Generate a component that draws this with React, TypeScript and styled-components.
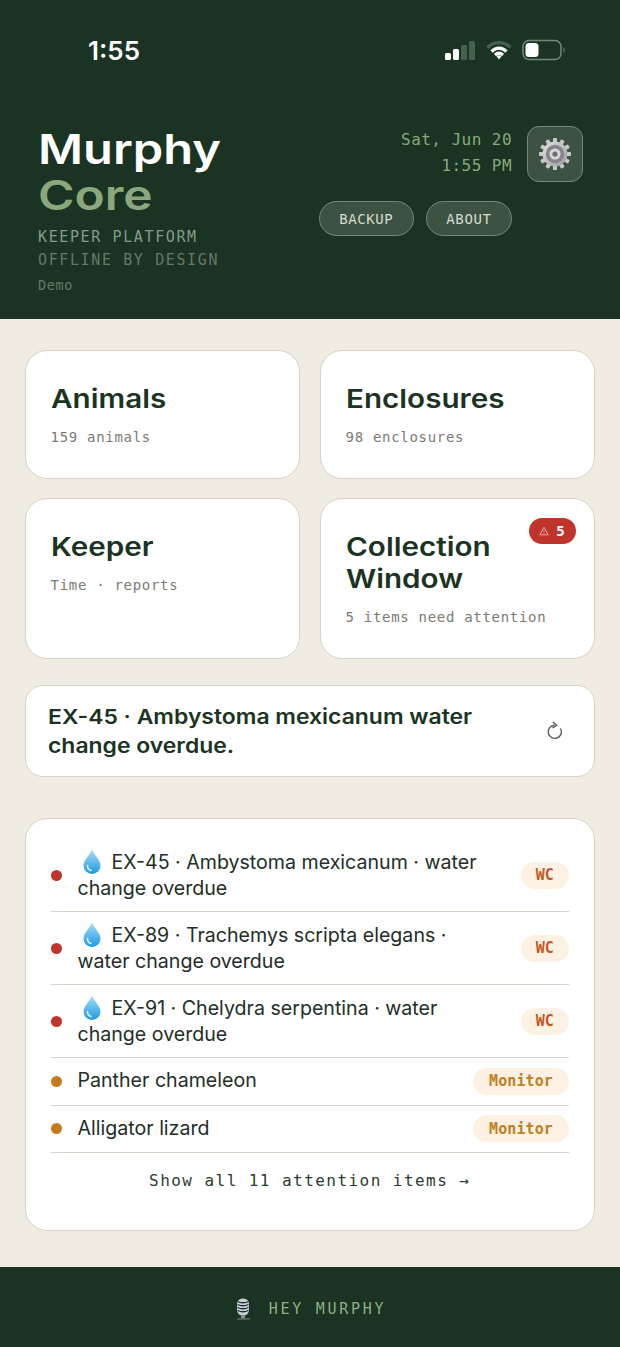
import styled, { createGlobalStyle } from 'styled-components';

const GlobalStyle = createGlobalStyle`
  html, body {
    margin: 0;
    padding: 0;
    background: #f0ebe3;
    font-family: 'Inter', 'Liberation Sans', sans-serif;
  }
`;

const MONO = `'DejaVu Sans Mono', 'Liberation Mono', monospace`;
const FOREST = '#1b3323';

const Page = styled.div`
  width: 620px;
  height: 1347px;
  display: flex;
  flex-direction: column;
  background: #f0ebe3;
  overflow: hidden;
`;

const Header = styled.header`
  height: 319px;
  flex: none;
  box-sizing: border-box;
  background: ${FOREST};
  padding-top: 35px;
`;

const StatusBar = styled.div`
  height: 30px;
  display: flex;
  align-items: center;
  justify-content: space-between;
  padding: 0 54px 0 88px;
`;

const Clock = styled.span`
  font-size: 26px;
  font-weight: 600;
  color: #fff;
`;

const StatusIcons = styled.div`
  display: flex;
  align-items: center;
  gap: 10px;
`;

const HeaderBody = styled.div`
  display: flex;
  justify-content: space-between;
  align-items: flex-start;
  padding: 61px 37px 0 38px;
`;

const Brand = styled.div`
  display: flex;
  flex-direction: column;
`;

/* the display face is wide, so the sans gets stretched horizontally */
const Wide = styled.span<{ $stretch: number }>`
  display: block;
  white-space: nowrap;
  transform: scaleX(${(p) => p.$stretch});
  transform-origin: left center;
`;

const BrandLine = styled.div<{ $color: string }>`
  font-size: 41px;
  line-height: 46px;
  font-weight: 600;
  color: ${(p) => p.$color};
`;

const Tagline = styled.div<{ $color: string; $first?: boolean }>`
  font-family: ${MONO};
  font-size: 15px;
  line-height: 23px;
  letter-spacing: 1.62px;
  margin-top: ${(p) => (p.$first ? '8px' : '0')};
  color: ${(p) => p.$color};
`;

const DemoTag = styled.div`
  font-family: ${MONO};
  font-size: 13.5px;
  line-height: 20px;
  letter-spacing: 0.6px;
  margin-top: 3px;
  color: #64796a;
`;

const HeaderActions = styled.div`
  display: grid;
  grid-template-columns: auto 56px;
  column-gap: 15px;
  row-gap: 19px;
`;

const DateBlock = styled.div`
  padding-top: 1px;
  font-family: ${MONO};
  font-size: 16px;
  line-height: 26px;
  letter-spacing: 0.45px;
  text-align: right;
  color: #8aa87c;
`;

const GearButton = styled.button`
  width: 56px;
  height: 56px;
  box-sizing: border-box;
  padding: 0;
  display: flex;
  align-items: center;
  justify-content: center;
  border-radius: 12px;
  border: 1.5px solid #728a78;
  background: #3d5243;
`;

const PillRow = styled.div`
  display: flex;
  gap: 12px;
`;

const Pill = styled.button`
  height: 35px;
  box-sizing: border-box;
  padding: 0 19.5px;
  border-radius: 18px;
  border: 1.5px solid #728a78;
  background: #3d5243;
  color: #d4dccf;
  font-family: ${MONO};
  font-size: 14px;
  letter-spacing: 0.6px;
`;

const Main = styled.main`
  flex: 1;
  display: flex;
  flex-direction: column;
  padding: 31px 25px 0;
`;

const CardGrid = styled.div`
  display: grid;
  grid-template-columns: 275px 275px;
  grid-template-rows: 129px 161px;
  column-gap: 20px;
  row-gap: 19px;
`;

const Card = styled.div`
  position: relative;
  box-sizing: border-box;
  padding: 32px 24.5px 0;
  background: #fff;
  border: 1.5px solid #d8d3c6;
  border-radius: 22px;
`;

const CardTitle = styled.div`
  font-size: 26px;
  line-height: 32px;
  font-weight: 600;
  color: ${FOREST};
`;

const CardNote = styled.div`
  margin-top: 12px;
  font-family: ${MONO};
  font-size: 14px;
  line-height: 20px;
  letter-spacing: 0.7px;
  color: #7b7b72;
`;

const AlertBadge = styled.div`
  position: absolute;
  top: 18.5px;
  right: 18.5px;
  height: 26px;
  width: 47px;
  display: flex;
  align-items: center;
  justify-content: center;
  gap: 7px;
  border-radius: 13px;
  background: #c0352b;
  color: #fff;
  font-family: ${MONO};
  font-size: 14px;
  font-weight: 700;
`;

const Banner = styled.div`
  height: 92px;
  margin-top: 25.5px;
  box-sizing: border-box;
  display: flex;
  align-items: center;
  justify-content: space-between;
  padding: 0 29.5px 0 21.5px;
  background: #fff;
  border: 1.5px solid #d8d3c6;
  border-radius: 18px;
`;

const BannerText = styled.div`
  font-size: 20.5px;
  line-height: 29px;
  font-weight: 600;
  color: ${FOREST};
`;

const AttentionCard = styled.section`
  height: 413px;
  margin-top: 41px;
  box-sizing: border-box;
  padding: 20.5px 25px 0 24.5px;
  background: #fff;
  border: 1.5px solid #d8d3c6;
  border-radius: 22px;
`;

const AttentionRow = styled.div`
  display: flex;
  align-items: center;
  padding: 9.75px 0;
  border-bottom: 1.5px solid #d9d5ca;
`;

const Dot = styled.span<{ $color: string }>`
  flex: none;
  width: 11px;
  height: 11px;
  border-radius: 50%;
  background: ${(p) => p.$color};
  margin-right: 16px;
`;

const RowText = styled.div`
  flex: 1;
  padding-right: 24px;
  font-size: 19.6px;
  line-height: 25.75px;
  color: #222e28;
`;

const Drop = styled.svg`
  width: 20px;
  height: 25px;
  margin: 0 10px 0 4px;
  vertical-align: -5px;
`;

const Tag = styled.span<{ $color: string; $inset: number }>`
  flex: none;
  height: 27px;
  box-sizing: border-box;
  padding: 0 ${(p) => p.$inset}px;
  display: flex;
  align-items: center;
  border-radius: 14px;
  background: #fdf1e3;
  color: ${(p) => p.$color};
  font-family: ${MONO};
  font-size: 15px;
  font-weight: 700;
  letter-spacing: 0.1px;
`;

const ShowAll = styled.div`
  margin-top: 16px;
  text-align: center;
  font-family: ${MONO};
  font-size: 16px;
  line-height: 24px;
  letter-spacing: 1.45px;
  color: #2b3c30;
`;

const Footer = styled.footer`
  height: 80px;
  flex: none;
  box-sizing: border-box;
  padding-top: 3px;
  display: flex;
  align-items: center;
  justify-content: center;
  gap: 17px;
  background: ${FOREST};
  color: #8fae84;
  font-family: ${MONO};
  font-size: 15px;
  letter-spacing: 2.7px;
`;

function SignalIcon() {
  return (
    <svg width="32" height="20" viewBox="0 0 32 20">
      <rect x="1" y="13" width="6" height="7" rx="1.5" fill="#fff" />
      <rect x="9" y="9" width="6" height="11" rx="1.5" fill="#fff" />
      <rect x="17" y="5" width="6" height="15" rx="1.5" fill="#46604e" />
      <rect x="25" y="1" width="6" height="19" rx="1.5" fill="#46604e" />
    </svg>
  );
}

function WifiIcon() {
  return (
    <svg width="26" height="20" viewBox="0 0 26 20" fill="none" strokeWidth="3.2">
      <path d="M1.5 7.5C8 1 18 1 24.5 7.5" stroke="#46604e" />
      <path d="M5.5 11.5C10 7 16 7 20.5 11.5" stroke="#fff" />
      <path d="M9 15C11.5 12.8 14.5 12.8 17 15" stroke="#fff" />
      <path d="M10.5 16.2L13 19.5L15.5 16.2C14 15 12 15 10.5 16.2Z" fill="#fff" />
    </svg>
  );
}

function BatteryIcon() {
  return (
    <svg width="44" height="22" viewBox="0 0 44 22" fill="none">
      <rect x="1" y="1.5" width="38" height="19" rx="6" stroke="#728a78" strokeWidth="1.5" />
      <rect x="3.5" y="4" width="13" height="14" rx="3.5" fill="#fff" />
      <path d="M41.5 8.5C43 9 43 13 41.5 13.5Z" fill="#728a78" />
    </svg>
  );
}

function GearIcon() {
  const teeth = Array.from({ length: 12 }, (_, i) => i * 30);
  return (
    <svg width="34" height="34" viewBox="0 0 34 34">
      <defs>
        <linearGradient id="gearMetal" x1="0" y1="0" x2="1" y2="1">
          <stop offset="0" stopColor="#e2e2e2" />
          <stop offset="1" stopColor="#9a9a9e" />
        </linearGradient>
      </defs>
      {teeth.map((deg) => (
        <rect key={deg} x="15" y="1" width="4" height="7" rx="0.8" fill="#c9c9c9" transform={`rotate(${deg} 17 17)`} />
      ))}
      <circle cx="17" cy="17" r="12.5" fill="url(#gearMetal)" />
      <circle cx="17" cy="17" r="9.2" fill="#85858e" />
      <circle cx="17" cy="17" r="5.6" fill="#d6d6da" />
      <circle cx="17" cy="17" r="2.6" fill="#6c6c74" />
    </svg>
  );
}

function RefreshIcon() {
  return (
    <svg width="20" height="20" viewBox="0 0 20 20" fill="none" stroke="#5c5c58" strokeWidth="1.4" strokeLinecap="round" strokeLinejoin="round">
      <path d="M9 4.2A6.6 6.6 0 1 0 15.8 8" />
      <path d="M8.2 1.2L11.6 4.3L8 6.6" />
    </svg>
  );
}

function WarningIcon() {
  return (
    <svg width="10" height="10" viewBox="0 0 10 10" fill="none" stroke="#f2a79c" strokeWidth="1">
      <path d="M5 1.2L9.2 8.8H.8Z" strokeLinejoin="round" />
      <path d="M5 4v2.4M5 7.2v.5" strokeWidth="0.8" />
    </svg>
  );
}

function WaterDrop() {
  return (
    <Drop viewBox="0 0 20 25">
      <defs>
        <linearGradient id="dropFill" x1="0" y1="0" x2="0" y2="1">
          <stop offset="0" stopColor="#a9defa" />
          <stop offset="1" stopColor="#1c9be0" />
        </linearGradient>
      </defs>
      <path d="M10 0.5C12 6 18.5 11 18.5 16.5A8.5 8.5 0 0 1 1.5 16.5C1.5 11 8 6 10 0.5Z" fill="url(#dropFill)" />
      <path d="M5.5 16.5C5.5 19 7 21 9 21.4" stroke="#e3f5ff" strokeWidth="1.6" fill="none" strokeLinecap="round" />
    </Drop>
  );
}

function MicIcon() {
  return (
    <svg width="18" height="22" viewBox="0 0 18 22">
      <rect x="3" y="0.5" width="12" height="17" rx="5.5" fill="#c9cdd0" />
      {[3.5, 6.5, 9.5, 12.5].map((y) => (
        <path key={y} d={`M3.5 ${y}C7 ${y + 1.6} 11 ${y + 1.6} 14.5 ${y}`} stroke="#1d2b3f" strokeWidth="1.3" fill="none" />
      ))}
      <rect x="7" y="17.5" width="4" height="3" fill="#8c9090" />
      <rect x="3" y="20.4" width="13" height="1.2" fill="#6e7a72" />
    </svg>
  );
}

type Item = { label: string; water: boolean; tag: string };

const items: Item[] = [
  { label: 'EX-45 · Ambystoma mexicanum · water change overdue', water: true, tag: 'WC' },
  { label: 'EX-89 · Trachemys scripta elegans · water change overdue', water: true, tag: 'WC' },
  { label: 'EX-91 · Chelydra serpentina · water change overdue', water: true, tag: 'WC' },
  { label: 'Panther chameleon', water: false, tag: 'Monitor' },
  { label: 'Alligator lizard', water: false, tag: 'Monitor' },
];

export default function App() {
  return (
    <Page>
      <GlobalStyle />
      <Header>
        <StatusBar>
          <Clock>1:55</Clock>
          <StatusIcons>
            <SignalIcon />
            <WifiIcon />
            <BatteryIcon />
          </StatusIcons>
        </StatusBar>
        <HeaderBody>
          <Brand>
            <BrandLine $color="#fff"><Wide $stretch={1.19}>Murphy</Wide></BrandLine>
            <BrandLine $color="#8aa87c"><Wide $stretch={1.21}>Core</Wide></BrandLine>
            <Tagline $first $color="#869a8a">KEEPER PLATFORM</Tagline>
            <Tagline $color="#64796a">OFFLINE BY DESIGN</Tagline>
            <DemoTag>Demo</DemoTag>
          </Brand>
          <HeaderActions>
            <DateBlock>
              Sat, Jun 20
              <br />
              1:55 PM
            </DateBlock>
            <GearButton>
              <GearIcon />
            </GearButton>
            <PillRow>
              <Pill>BACKUP</Pill>
              <Pill>ABOUT</Pill>
            </PillRow>
          </HeaderActions>
        </HeaderBody>
      </Header>
      <Main>
        <CardGrid>
          <Card>
            <CardTitle><Wide $stretch={1.14}>Animals</Wide></CardTitle>
            <CardNote>159 animals</CardNote>
          </Card>
          <Card>
            <CardTitle><Wide $stretch={1.14}>Enclosures</Wide></CardTitle>
            <CardNote>98 enclosures</CardNote>
          </Card>
          <Card>
            <CardTitle><Wide $stretch={1.14}>Keeper</Wide></CardTitle>
            <CardNote>Time · reports</CardNote>
          </Card>
          <Card>
            <AlertBadge>
              <WarningIcon />5
            </AlertBadge>
            <CardTitle>
              <Wide $stretch={1.14}>
                Collection
                <br />
                Window
              </Wide>
            </CardTitle>
            <CardNote>5 items need attention</CardNote>
          </Card>
        </CardGrid>
        <Banner>
          <BannerText>
            <Wide $stretch={1.118}>
              EX-45 · Ambystoma mexicanum water
              <br />
              change overdue.
            </Wide>
          </BannerText>
          <RefreshIcon />
        </Banner>
        <AttentionCard>
          {items.map((item) => (
            <AttentionRow key={item.label}>
              <Dot $color={item.water ? '#c0352b' : '#c47a1e'} />
              <RowText>
                {item.water && <WaterDrop />}
                {item.label}
              </RowText>
              <Tag $color={item.water ? '#bf5a1f' : '#c0801f'} $inset={item.water ? 15 : 16}>
                {item.tag}
              </Tag>
            </AttentionRow>
          ))}
          <ShowAll>Show all 11 attention items →</ShowAll>
        </AttentionCard>
      </Main>
      <Footer>
        <MicIcon />
        HEY MURPHY
      </Footer>
    </Page>
  );
}
